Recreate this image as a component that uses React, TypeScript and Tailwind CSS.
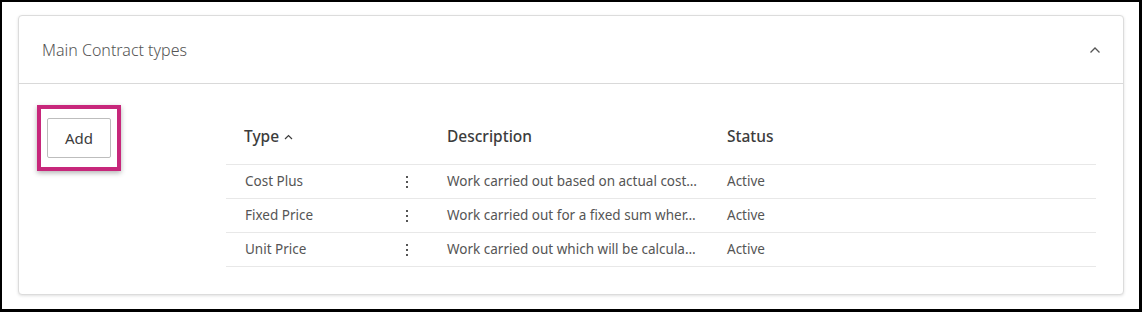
import React from "react";

const rows = [
  { type: "Cost Plus", desc: "Work carried out based on actual cost…", status: "Active" },
  { type: "Fixed Price", desc: "Work carried out for a fixed sum wher…", status: "Active" },
  { type: "Unit Price", desc: "Work carried out which will be calcula…", status: "Active" },
];

function Kebab() {
  return (
    <svg width="4" height="14" viewBox="0 0 4 14" className="block">
      <rect x="1" y="1" width="2" height="2" fill="#555" />
      <rect x="1" y="6" width="2" height="2" fill="#555" />
      <rect x="1" y="11" width="2" height="2" fill="#555" />
    </svg>
  );
}

export default function App() {
  return (
    <div
      className="w-[1142px] h-[312px] bg-white border-l-2 border-t-2 border-r-[3px] border-b-[3px] border-black pl-[16px] pt-[13px] pr-[15px]"
      style={{ fontFamily: '"Noto Sans", "Open Sans", sans-serif' }}
    >
      <div className="w-[1106px] h-[280px] rounded-[4px] border border-[#dcdcdc] bg-white shadow-[0_1px_3px_rgba(0,0,0,0.12)]">
        <div className="h-[68px] flex items-center justify-between pl-[23px] pr-[22px] border-b border-[#d9d9d9]">
          <span className="text-[16px] font-light text-[#555]">Main Contract types</span>
          <svg width="12" height="8" viewBox="0 0 12 8">
            <path d="M1.5 6.5 L6 2 L10.5 6.5" stroke="#555" strokeWidth="1.3" fill="none" />
          </svg>
        </div>
        <div className="flex pt-[21px]">
          <div className="w-[207px] pl-[18px] shrink-0">
            <div className="w-[84px] h-[66px] border-[4px] border-[#c7277b] shadow-[0_2px_5px_rgba(0,0,0,0.3)] flex items-center justify-center">
              <div className="w-[64px] h-[40px] border border-[#bdbdbd] rounded-[2px] flex items-center justify-center text-[15px] text-[#3c3c3c]">
                Add
              </div>
            </div>
          </div>
          <div className="w-[870px] text-[#3c3c3c]">
            <div className="grid grid-cols-[160px_61px_280px_1fr] h-[60px] items-center border-b border-[#e8e8e8] pt-[4px]">
              <div className="pl-[18px] flex items-center gap-[5px] text-[15.5px] font-medium text-[#3c3c3c]">
                Type
                <svg width="9" height="6" viewBox="0 0 9 6">
                  <path d="M1 5 L4.5 1.5 L8 5" stroke="#3c3c3c" strokeWidth="1.2" fill="none" />
                </svg>
              </div>
              <div />
              <div className="text-[15.5px] font-medium">Description</div>
              <div className="text-[15.5px] font-medium">Status</div>
            </div>
            {rows.map((r) => (
              <div
                key={r.type}
                className="grid grid-cols-[160px_61px_280px_1fr] h-[34px] items-center border-b border-[#e8e8e8] text-[13.5px] text-[#555]"
              >
                <div className="pl-[19px]">{r.type}</div>
                <div className="pl-[19px]">
                  <Kebab />
                </div>
                <div className="whitespace-nowrap">{r.desc}</div>
                <div>{r.status}</div>
              </div>
            ))}
          </div>
        </div>
      </div>
    </div>
  );
}
